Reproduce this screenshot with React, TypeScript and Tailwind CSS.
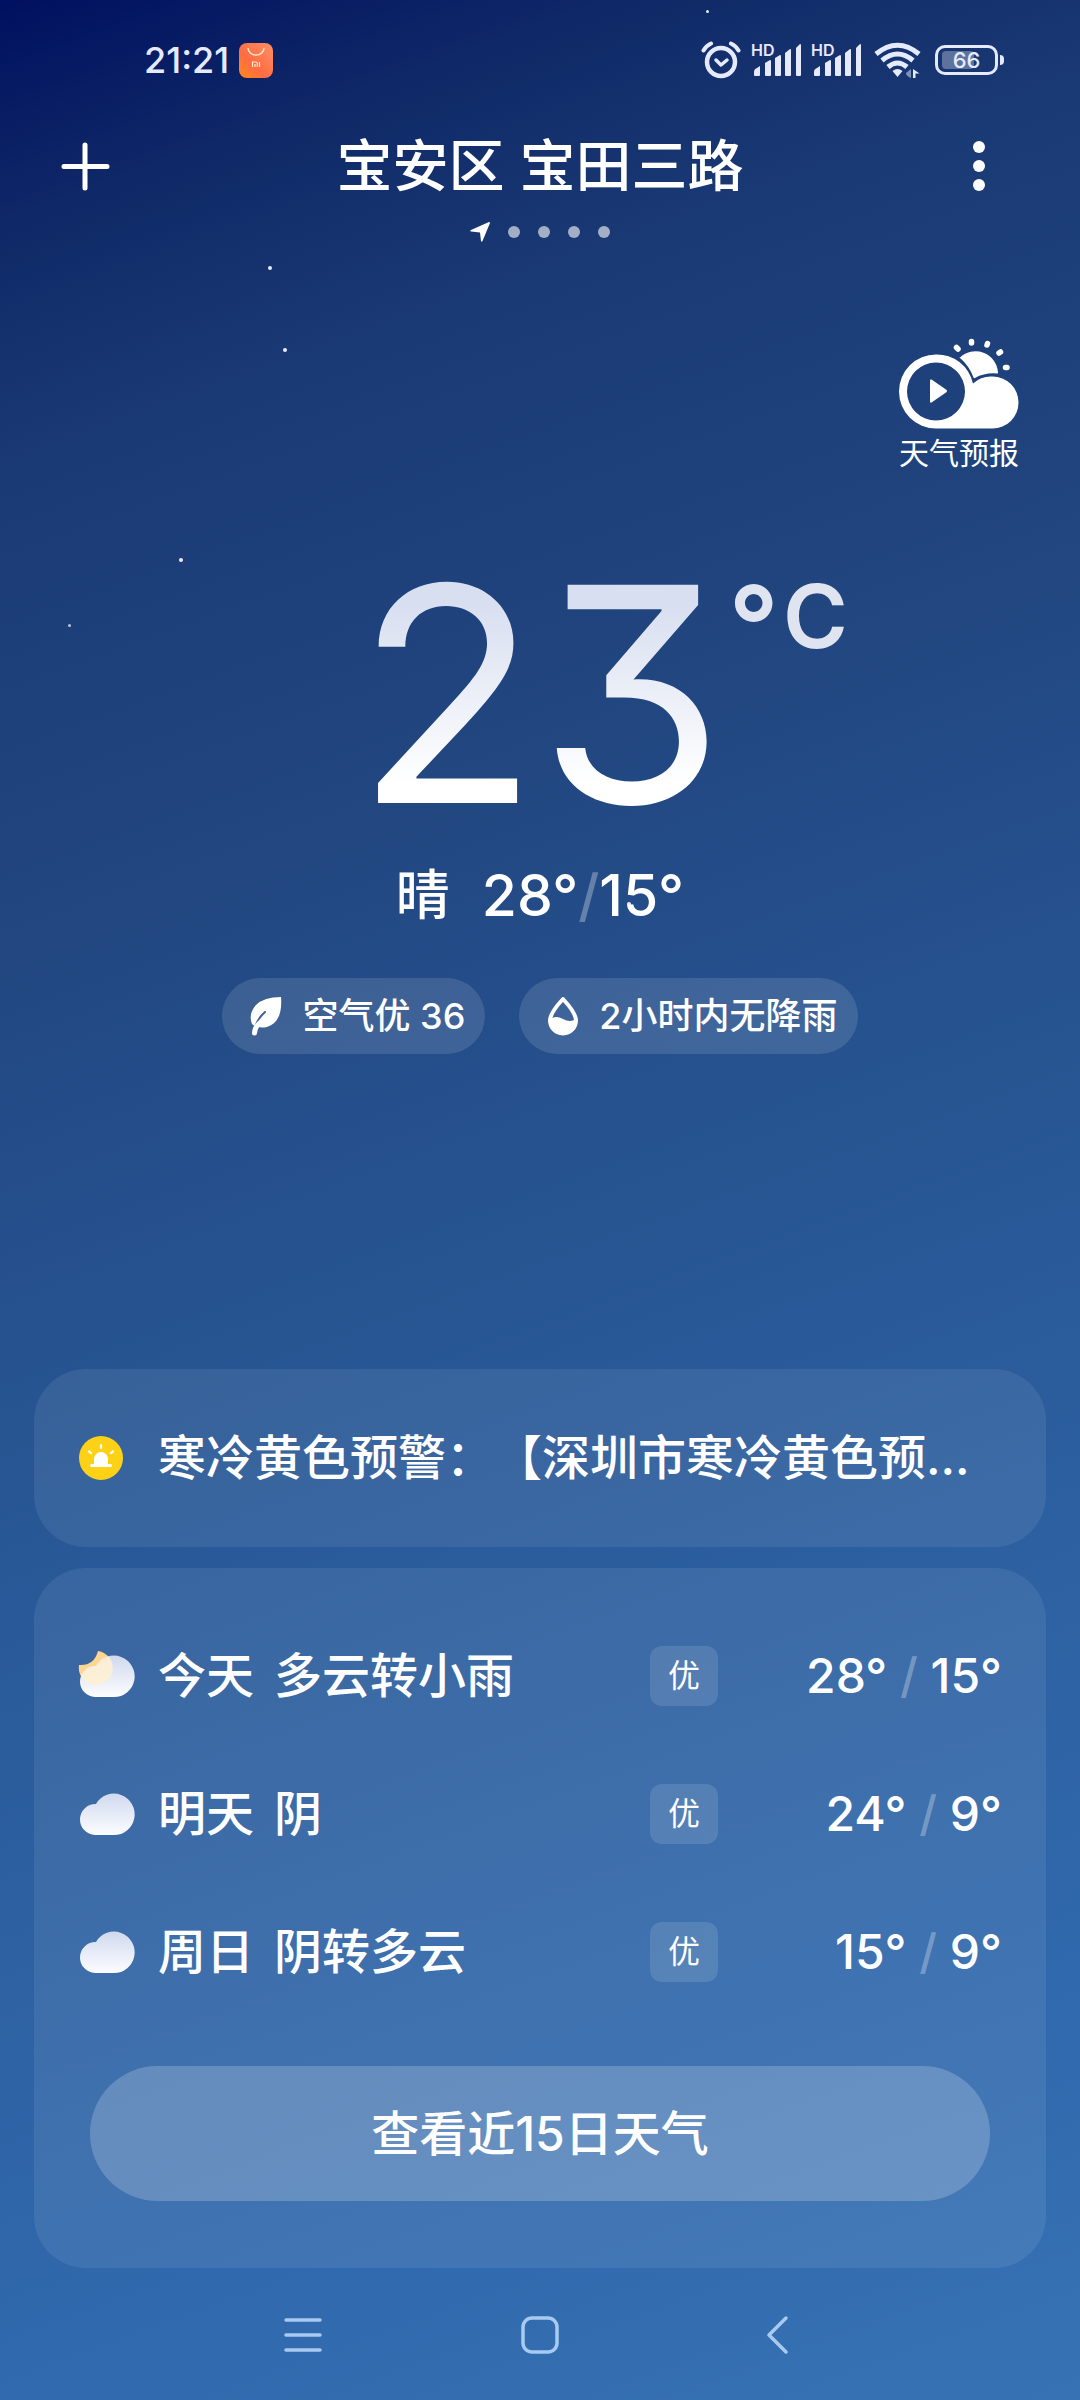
import React from "react";

type Sky = "night" | "cloud";

const forecast: { day: string; desc: string; sky: Sky; aqi: string; high: string; low: string }[] = [
  { day: "今天", desc: "多云转小雨", sky: "night", aqi: "优", high: "28°", low: "15°" },
  { day: "明天", desc: "阴", sky: "cloud", aqi: "优", high: "24°", low: "9°" },
  { day: "周日", desc: "阴转多云", sky: "cloud", aqi: "优", high: "15°", low: "9°" },
];

function Signal() {
  return (
    <div className="relative">
      <span className="absolute left-0 top-0 text-[16px] leading-none font-semibold">HD</span>
      <svg width="51" height="36" viewBox="0 0 51 36" fill="currentColor">
        <path d="M3 33v-3q0-3 3-4l3-2v9q0 1-1 1H4q-1 0-1-1z" />
        <path d="M14 33V21l5-3q1 0 1 1v14q0 1-1 1h-4q-1 0-1-1z" />
        <path d="M24 33V16l5-3q1 0 1 1v19q0 1-1 1h-4q-1 0-1-1z" />
        <path d="M34 33V11l5-4q1 0 1 1v25q0 1-1 1h-4q-1 0-1-1z" />
        <path d="M45 33V6l4-4q1 0 1 1v30q0 1-1 1h-3q-1 0-1-1z" />
      </svg>
    </div>
  );
}

function StatusBar() {
  return (
    <div className="flex items-center justify-between pt-10 pl-[144px] pr-[76px] text-[#e6eaff]">
      <div className="flex h-10 items-center gap-[10px]">
        <span className="text-[36px] leading-none font-medium">21:21</span>
        <svg width="34" height="35" viewBox="0 0 34 35" fill="none">
          <defs>
            <linearGradient id="shop" x1="1" y1="0" x2="0" y2="1">
              <stop offset="0" stopColor="#ff9068" />
              <stop offset=".6" stopColor="#ff6c42" />
              <stop offset="1" stopColor="#ff8a20" />
            </linearGradient>
          </defs>
          <rect width="34" height="35" rx="8" fill="url(#shop)" />
          <path d="M9 5a8 7 0 0 0 16 0" stroke="#ffe9cf" strokeWidth="1.4" />
          <path d="M13.5 24v-5h3.2q1.6 0 1.6 1.6V24M16 21v3M20.5 19v5" stroke="#ffe9cf" strokeWidth="1.2" />
        </svg>
      </div>
      <div className="flex items-center">
        <svg width="40" height="40" viewBox="0 0 40 40" fill="none" stroke="currentColor" strokeLinecap="round">
          <circle cx="20" cy="22" r="14" strokeWidth="4.5" />
          <path d="M15 20l5 5 6-5" strokeWidth="3.5" strokeLinejoin="round" />
          <path d="M2.500 10.500Q5 6 10 3.500M37.500 10.500Q35 6 30 3.500" strokeWidth="4" />
        </svg>
        <div className="ml-[10px] flex gap-[9px]">
          <Signal />
          <Signal />
        </div>
        <svg className="ml-3" width="47" height="36" viewBox="0 0 47 36" fill="none" stroke="currentColor">
          <path d="M2 12Q23.500-5.500 45 12" strokeWidth="5" />
          <path d="M8 18.500Q23.500 5.500 39 18.500" strokeWidth="5" />
          <path d="M14 25Q23.500 17 33 25" strokeWidth="5" />
          <path d="M18.500 29Q23.500 25 28.500 29l-5 6z" fill="currentColor" stroke="none" />
          <path d="M37 27v9q-5-2-5-5z" fill="currentColor" stroke="none" opacity=".5" />
          <path d="M39 27v9h2.500v-4.500h4z" fill="currentColor" stroke="none" />
        </svg>
        <div className="ml-[14px] flex items-center gap-[2px]">
          <div className="relative flex h-[30px] w-[63px] items-center justify-center rounded-[10px] border-[3px] border-current text-[22px] leading-none font-medium">
            <span className="absolute top-[3px] bottom-[3px] left-1 w-8 rounded bg-white/30" />
            <span className="relative">66</span>
          </div>
          <span className="h-[10px] w-1 rounded-r bg-current" />
        </div>
      </div>
    </div>
  );
}

function Header() {
  return (
    <header className="mt-[46px] grid grid-cols-[1fr_auto_1fr] items-center px-[61px]">
      <button aria-label="添加城市" className="justify-self-start">
        <svg width="49" height="49" viewBox="0 0 49 49" stroke="white" strokeWidth="5" strokeLinecap="round">
          <path d="M24 3v43M3 24.500h43" />
        </svg>
      </button>
      <h1 className="text-[56px] leading-[80px] font-medium">宝安区 宝田三路</h1>
      <button aria-label="更多" className="mr-[31px] justify-self-end">
        <svg width="18" height="50" viewBox="0 0 18 50" fill="white">
          <circle cx="9" cy="6" r="6" />
          <circle cx="9" cy="25" r="6" />
          <circle cx="9" cy="44" r="6" />
        </svg>
      </button>
    </header>
  );
}

function Pager() {
  return (
    <div className="mt-4 flex items-center justify-center gap-[18px]">
      <svg width="20" height="20" viewBox="0 0 20 20" fill="white">
        <path d="M19 0q1 0 1 1l-7.500 18q-1 1.500-1.500 0l-1-8.500L1 9.500q-1.500-.5 0-1.500z" />
      </svg>
      <span className="size-3 rounded-full bg-white/60" />
      <span className="size-3 rounded-full bg-white/60" />
      <span className="size-3 rounded-full bg-white/60" />
      <span className="size-3 rounded-full bg-white/60" />
    </div>
  );
}

function VideoForecast() {
  return (
    <a href="#video" className="mt-24 mr-[61px] flex flex-col items-center self-end">
      <svg width="120" height="91" viewBox="0 0 120 91">
        <g fill="white">
          <path fillRule="evenodd" d="M37 16.500a37 37 0 0 1 37 29A26.500 26.500 0 0 1 93.500 38.500a26 26 0 0 1 0 52H37a37 37 0 0 1 0-74zm0 8a29 29 0 1 0 0 58a29 29 0 1 0 0-58z" />
          <path d="M31 42.500q0-1.500 1.500-1L47 51.500q2 1.500 0 3L32.500 64.500q-1.500.5-1.500-1z" />
          <path d="M60.500 20A22.500 22.500 0 0 1 99 34.500q.5 1-1 1Q86 34.500 76 40q-1 .5-1.500-.5Q70 27.500 60.500 19.500z" />
        </g>
        <g stroke="white" strokeWidth="5.500" strokeLinecap="round">
          <path d="M57.500 9.500l1.500 1.500M72.500 3.500v1.500M88.500 5.500l-.5 1.500M101.500 14l-1.500 1M108 29.500h-1.500" />
        </g>
      </svg>
      <span className="mt-1 text-[30px] leading-[40px]">天气预报</span>
    </a>
  );
}

function Current() {
  return (
    <section className="flex flex-col items-center">
      <div className="mt-[71px] grid w-full grid-cols-[1fr_auto_1fr] items-start">
        <span className="col-start-2 bg-linear-to-b from-[#d8dff0] from-20% to-white to-80% bg-clip-text text-[300px] leading-[300px] font-normal text-transparent [font-feature-settings:'cv09']">
          23
        </span>
        <span className="mt-[28px] ml-1 flex items-start gap-1 font-semibold text-[#dfe4f0]">
          <span className="text-[110px] leading-[106px]">°</span>
          <span className="text-[88px] leading-[88px]">C</span>
        </span>
      </div>
      <div className="mt-3 flex items-center gap-8 leading-[80px] font-medium">
        <span className="text-[54px]">晴</span>
        <span className="text-[57px]">
          28°<span className="text-white/30">/</span>15°
        </span>
      </div>
      <div className="mt-[42px] flex gap-[34px] text-[36px] font-medium">
        <button className="flex h-[76px] items-center gap-5 rounded-full bg-white/12 pr-5 pl-7">
          <svg width="32" height="40" viewBox="0 0 32 40" fill="none">
            <path d="M31 1Q14 1 6 9Q-2 18 2 28Q8 33 17 31Q33 26 31 1z" fill="white" />
            <path d="M15 16Q5 25 4 37" stroke="#3f6198" strokeWidth="2" strokeLinecap="round" />
            <path d="M12 25Q5 30 4.500 37" stroke="white" strokeWidth="5" strokeLinecap="round" />
          </svg>
          空气优 36
        </button>
        <button className="flex h-[76px] items-center gap-5 rounded-full bg-white/12 pr-5 pl-7">
          <svg width="32" height="40" viewBox="0 0 32 40" fill="none">
            <path d="M16 3Q29 17 29 24.500a13 13 0 0 1-26 0Q3 17 16 3z" stroke="white" strokeWidth="4" strokeLinejoin="round" />
            <path d="M3 23q6-4 13 0t13 0v3a13 13 0 0 1-26 0z" fill="white" />
          </svg>
          2小时内无降雨
        </button>
      </div>
    </section>
  );
}

const CLOUD = "M18 15A20.700 20.700 0 1 1 35.500 46H17A15.300 15.300 0 0 1 18 15z";
const MOON = "M20 0A17 17 0 1 1 1 14Q16 15 20 0z";

function SkyIcon({ sky }: { sky: Sky }) {
  return (
    <svg width="56" height="50" viewBox="0 0 56 50" overflow="visible">
      <defs>
        <linearGradient id="cloud" x1="0" y1="0" x2="0" y2="1">
          <stop offset="0" stopColor="#d0d9ee" />
          <stop offset="1" stopColor="#fcfdff" />
        </linearGradient>
        <clipPath id="cloud-clip">
          <path d={CLOUD} />
        </clipPath>
      </defs>
      {sky === "night" && <path d={MOON} fill="#ffd590" />}
      <path d={CLOUD} fill="url(#cloud)" />
      {sky === "night" && <path d={MOON} fill="#fff0d4" opacity=".9" clipPath="url(#cloud-clip)" />}
    </svg>
  );
}

function Alert() {
  return (
    <a href="#alert" className="mx-[34px] mt-[315px] flex h-[178px] items-center gap-[35px] rounded-[52px] bg-white/8 pl-[45px] pr-[69px]">
      <svg className="shrink-0" width="44" height="44" viewBox="0 0 44 44">
        <circle cx="22" cy="22" r="22" fill="#fdd116" />
        <path d="M15 28v-5a7 7 0 0 1 14 0v5h2.500q1.500 0 1.500 1.500T31.500 31h-19q-1.500 0-1.500-1.500t1.500-1.500z" fill="white" />
        <path d="M22 9v3M10 15.500l2 1.500M34 15.500l-2 1.500" stroke="white" strokeWidth="2.200" strokeLinecap="round" />
      </svg>
      <span className="overflow-hidden text-[48px] font-medium whitespace-nowrap [text-spacing-trim:space-all]">
        寒冷黄色预警：【深圳市寒冷黄色预...
      </span>
    </a>
  );
}

function Forecast() {
  return (
    <section className="mx-[34px] mt-[21px] flex flex-col rounded-[52px] bg-white/8 px-11 pt-[39px] pb-[67px]">
      <ul>
        {forecast.map((f) => (
          <li key={f.day} className="flex h-[138px] items-center text-[48px] font-medium">
            <SkyIcon sky={f.sky} />
            <span className="ml-6">{f.day}</span>
            <span className="ml-5 flex-1">{f.desc}</span>
            <span className="flex h-[60px] w-[68px] items-center justify-center rounded-xl bg-white/12 text-[32px] font-normal">
              {f.aqi}
            </span>
            <span className="w-[284px] text-right">
              {f.high} <span className="text-white/30">/</span> {f.low}
            </span>
          </li>
        ))}
      </ul>
      <button className="mx-3 mt-[45px] h-[135px] rounded-full bg-white/20 text-[48px] font-medium">查看近15日天气</button>
    </section>
  );
}

function NavBar() {
  return (
    <nav className="flex items-center justify-evenly px-[86px] pt-[46px] pb-[44px] text-[#a9caf0]">
      <button aria-label="最近任务">
        <svg width="42" height="42" viewBox="0 0 42 42" stroke="currentColor" strokeWidth="3.500" strokeLinecap="round">
          <path d="M4 6h34M4 21h34M4 36h34" />
        </svg>
      </button>
      <button aria-label="主屏幕">
        <svg width="42" height="42" viewBox="0 0 42 42" fill="none" stroke="currentColor" strokeWidth="3.500">
          <rect x="4" y="4" width="34" height="34" rx="9" />
        </svg>
      </button>
      <button aria-label="返回">
        <svg width="42" height="42" viewBox="0 0 42 42" fill="none" stroke="currentColor" strokeWidth="3.500" strokeLinecap="round" strokeLinejoin="round">
          <path d="M29 4L12 21l17 17" />
        </svg>
      </button>
    </nav>
  );
}

// 夜空中的星点
function Stars() {
  return (
    <div className="pointer-events-none absolute inset-0" aria-hidden="true">
      <span className="absolute top-[10px] left-[706px] size-[3px] rounded-full bg-white/90" />
      <span className="absolute top-[266px] left-[268px] size-1 rounded-full bg-white/90" />
      <span className="absolute top-[348px] left-[283px] size-1 rounded-full bg-white/90" />
      <span className="absolute top-[558px] left-[179px] size-1 rounded-full bg-white/90" />
      <span className="absolute top-[624px] left-[68px] size-[3px] rounded-full bg-white/70" />
      <span className="absolute top-[902px] left-[627px] size-1 rounded-full bg-white/90" />
    </div>
  );
}

export default function App() {
  return (
    <main className="relative flex min-h-screen flex-col bg-[linear-gradient(160deg,#001060_0%,#0f2867_8%,#1a3a75_17%,#21457f_32%,#265390_49%,#2d61a2_70%,#3069ad_85%,#3773b4_100%)] font-['Inter','Noto_Sans_CJK_SC',sans-serif] text-white">
      <Stars />
      <StatusBar />
      <Header />
      <Pager />
      <VideoForecast />
      <Current />
      <Alert />
      <Forecast />
      <NavBar />
    </main>
  );
}
